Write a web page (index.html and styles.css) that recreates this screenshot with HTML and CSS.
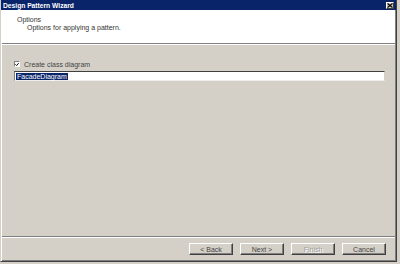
FILE: index.html
```html
<!DOCTYPE html>
<html>
<head>
<meta charset="utf-8">
<link rel="stylesheet" href="styles.css">
</head>
<body>
<div class="window">
  <div class="titlebar">
    <span class="title">Design Pattern Wizard</span>
    <span class="close"><svg width="6" height="5" viewBox="0 0 6 5"><path d="M0.5 0.5 L5.5 4.5 M5.5 0.5 L0.5 4.5" stroke="#000" stroke-width="1.2"/></svg></span>
  </div>
  <div class="client">
    <div class="header">
      <div class="h-title">Options</div>
      <div class="h-desc">Options for applying a pattern.</div>
    </div>
    <div class="content">
      <label class="check-row"><span class="checkbox"><svg width="5" height="5" viewBox="0 0 5 5"><path d="M0.5 2.2 L2 3.8 L4.6 0.8" stroke="#000" stroke-width="1.2" fill="none"/></svg></span>Create class diagram</label>
      <div class="input"><span class="sel">FacadeDiagram</span></div>
    </div>
    <div class="footer">
      <span class="btn">&lt; Back</span>
      <span class="btn">Next &gt;</span>
      <span class="btn disabled">Finish</span>
      <span class="btn">Cancel</span>
    </div>
  </div>
</div>
</body>
</html>
```

FILE: styles.css
```css
html, body {
  margin: 0;
  padding: 0;
}
body {
  width: 400px;
  height: 264px;
  background: #d4d0c8;
  font-family: "Liberation Sans", Arial, sans-serif;
  font-size: 7px;
  color: #000;
  overflow: hidden;
}
.window {
  box-sizing: border-box;
  width: 397px;
  height: 262px;
  display: flex;
  flex-direction: column;
  border-left: 1px solid #d4d0c8;
  border-right: 1px solid #404040;
  border-bottom: 1px solid #404040;
  box-shadow: inset -1px -1px 0 #808080;
  background: #d4d0c8;
}
.titlebar {
  height: 10px;
  flex: none;
  background: #0a246a;
  display: flex;
  align-items: center;
  justify-content: space-between;
  padding: 0 2px 0 2px;
}
.title {
  color: #fff;
  font-weight: bold;
  font-size: 6.7px;
}
.close {
  box-sizing: border-box;
  width: 8px;
  height: 7px;
  background: #d4d0c8;
  border: 1px solid;
  border-color: #fff #404040 #404040 #fff;
  display: flex;
  align-items: center;
  justify-content: center;
}
.client {
  flex: 1;
  display: flex;
  flex-direction: column;
  border-left: 1px solid #fff;
  margin-right: 1px;
}
.header {
  height: 34px;
  flex: none;
  background: #fff;
  border-bottom: 1px solid #808080;
  box-shadow: 0 1px 0 #fff;
  padding: 6px 0 0 15px;
  box-sizing: border-box;
}
.h-title {
  line-height: 8px;
  color: #333;
}
.h-desc {
  line-height: 8px;
  margin-left: 10px;
  color: #333;
}
.content {
  flex: 1;
  padding: 16px 10px 0 12px;
  border-bottom: 1px solid #808080;
}
.check-row {
  display: flex;
  align-items: center;
  gap: 4px;
  height: 8px;
  color: #444;
}
.checkbox {
  box-sizing: border-box;
  width: 6px;
  height: 6px;
  background: #fff;
  border: 1px solid;
  border-color: #808080 #fff #fff #808080;
  display: flex;
  align-items: center;
  justify-content: center;
}
.checkbox svg { display: block; }
.input {
  box-sizing: border-box;
  margin-top: 3px;
  height: 10px;
  background: #fff;
  border-top: 1px solid #404040;
  border-left: 1px solid #808080;
  border-right: 1px solid #d4d0c8;
  border-bottom: 1px solid #eee;
  display: flex;
  align-items: center;
  padding-left: 1px;
}
.sel {
  background: #0a246a;
  color: #fff;
  line-height: 7px;
  padding: 0 1px;
}
.footer {
  flex: none;
  height: 24px;
  border-top: 1px solid #fff;
  box-sizing: border-box;
  display: flex;
  justify-content: flex-end;
  align-items: flex-start;
  gap: 7px;
  padding: 5px 9px 0 0;
}
.btn {
  box-sizing: border-box;
  width: 44px;
  height: 12px;
  display: flex;
  align-items: center;
  justify-content: center;
  border: 1px solid;
  border-color: #fff #404040 #404040 #fff;
  box-shadow: inset -1px -1px 0 #808080;
  color: #444;
}
.btn.disabled {
  color: #a0a0a0;
  text-shadow: 1px 1px 0 #fff;
}
```
